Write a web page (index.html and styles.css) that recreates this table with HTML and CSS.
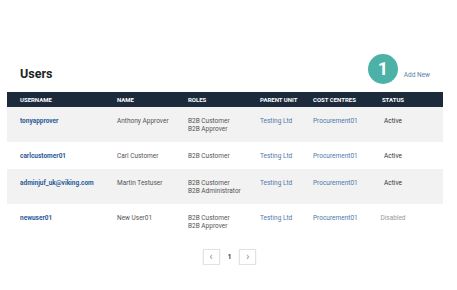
FILE: index.html
```html
<!DOCTYPE html>
<html>
<head>
<meta charset="utf-8">
<link rel="stylesheet" href="styles.css">
</head>
<body>
<div class="page">
  <div class="top">
    <h1 class="title">Users</h1>
    <div class="actions">
      <span class="badge">1</span>
      <a class="add">Add New</a>
    </div>
  </div>
  <div class="table">
    <div class="row head">
      <div>USERNAME</div><div>NAME</div><div>ROLES</div><div>PARENT UNIT</div><div>COST CENTRES</div><div class="status">STATUS</div>
    </div>
    <div class="row alt">
      <div class="user">tonyapprover</div><div class="txt">Anthony Approver</div><div class="txt">B2B Customer<br>B2B Approver</div><div class="lnk">Testing Ltd</div><div class="lnk">Procurement01</div><div class="status">Active</div>
    </div>
    <div class="row">
      <div class="user">carlcustomer01</div><div class="txt">Carl Customer</div><div class="txt">B2B Customer</div><div class="lnk">Testing Ltd</div><div class="lnk">Procurement01</div><div class="status">Active</div>
    </div>
    <div class="row alt">
      <div class="user">adminjuf_uk@viking.com</div><div class="txt">Martin Testuser</div><div class="txt">B2B Customer<br>B2B Administrator</div><div class="lnk">Testing Ltd</div><div class="lnk">Procurement01</div><div class="status">Active</div>
    </div>
    <div class="row">
      <div class="user">newuser01</div><div class="txt">New User01</div><div class="txt">B2B Customer<br>B2B Approver</div><div class="lnk">Testing Ltd</div><div class="lnk">Procurement01</div><div class="status off">Disabled</div>
    </div>
  </div>
  <div class="pager">
    <span class="pbtn">&#8249;</span>
    <span class="pnum">1</span>
    <span class="pbtn">&#8250;</span>
  </div>
</div>
</body>
</html>
```
FILE: styles.css
```css
html, body {
  margin: 0;
  padding: 0;
  background: #ffffff;
}
body {
  font-family: Roboto, "Liberation Sans", sans-serif;
  color: #444;
}
.page {
  width: 457px;
  padding-top: 54px;
}
.top {
  display: flex;
  justify-content: space-between;
  align-items: flex-start;
  margin: 0 27px 8px 20px;
  height: 30px;
}
.title {
  margin: 12px 0 0 0;
  font-size: 12.5px;
  line-height: 15px;
  font-weight: 700;
  color: #222;
}
.actions {
  display: flex;
  align-items: flex-start;
  gap: 6px;
}
.badge {
  width: 30px;
  height: 30px;
  border-radius: 50%;
  background: #4cb2a7;
  color: #fff;
  font-weight: 700;
  font-size: 18px;
  line-height: 30px;
  text-align: center;
}
.add {
  margin-top: 17px;
  font-size: 6.5px;
  line-height: 8px;
  color: #5a7fa8;
}
.table {
  margin-left: 7px;
  width: 436px;
}
.row {
  display: grid;
  grid-template-columns: 97px 71px 72px 53px 50px 60px;
  padding: 10px 0 9px 13px;
  font-size: 6.5px;
  line-height: 8px;
}
.row.alt {
  background: #f2f2f2;
}
.user {
  color: #2a5c98;
  font-weight: 700;
}
.txt {
  color: #555;
}
.lnk {
  color: #4f78aa;
}
.status {
  text-align: center;
  color: #333;
}
.status.off {
  color: #999;
}
.row.head {
  background: #1b2b3b;
  color: #fff;
  font-weight: 700;
  font-size: 6px;
  padding: 4px 0 3px 13px;
}
.row.head .status {
  color: #fff;
}
.pager {
  display: flex;
  justify-content: center;
  align-items: center;
  gap: 8px;
  margin-top: 10px;
  padding-left: 2px;
}
.pbtn {
  width: 15px;
  height: 14px;
  border: 1px solid #e2e2e2;
  box-shadow: 0 1px 2px rgba(0,0,0,0.08);
  color: #888;
  font-size: 10px;
  line-height: 13px;
  text-align: center;
}
.pnum {
  font-size: 6.5px;
  font-weight: 700;
  color: #333;
}
```
